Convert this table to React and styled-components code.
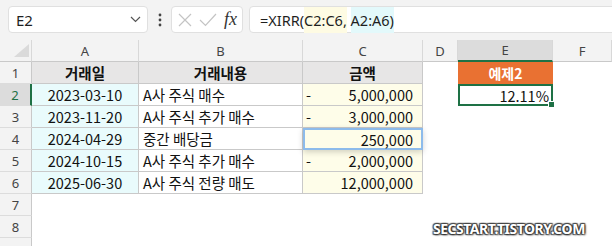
import React from 'react';
import styled, { createGlobalStyle, css } from 'styled-components';

const Global = createGlobalStyle`
  html, body { margin: 0; padding: 0; background: #fff; }
  body { font-family: "Noto Sans CJK KR", "Noto Sans", sans-serif; }
`;

const Page = styled.div`
  position: relative;
  width: 612px;
  height: 246px;
  overflow: hidden;
  background: #fff;
`;

const Toolbar = styled.div`
  display: flex;
  align-items: stretch;
  height: 40px;
  box-sizing: border-box;
  padding: 6px 0 7px 8px;
  background: #f3f3f3;
  overflow: hidden;
`;

const Box = styled.div`
  box-sizing: border-box;
  background: #fff;
  border: 1px solid #e0e0e0;
  border-radius: 4px;
  display: flex;
  align-items: center;
`;

const NameBox = styled(Box)`
  width: 140px;
  justify-content: space-between;
  padding: 0 6px 0 7px;
  font-family: "Noto Sans", sans-serif;
  font-size: 15px;
  color: #1f1f1f;
`;

const Dots = styled.div`
  width: 23px;
  display: flex;
  align-items: center;
  justify-content: center;
`;

const FuncBox = styled(Box)`
  width: 72px;
  padding: 0 5px 0 6px;
  justify-content: space-between;
`;

const Fx = styled.span`
  font-family: "Liberation Serif", serif;
  font-style: italic;
  font-size: 18px;
  color: #333;
  line-height: 1;
  margin-bottom: 2px;
`;

const FormulaBox = styled(Box)`
  flex: 1;
  margin-left: 6px;
  margin-right: -8px;
  padding-left: 10px;
  font-family: "Noto Sans", sans-serif;
  font-size: 14.5px;
  color: #1f1f1f;
`;

const FormulaText = styled.span`
  white-space: pre;
`;

const Ref = styled.span`
  background: ${p => p.$bg};
  padding: 3px 0;
`;

const Sheet = styled.div`
  display: grid;
  grid-template-columns: 32px 107px 164px 120px 35px 95px 1fr;
  grid-auto-rows: 22px;
`;

const ColHead = styled.div`
  box-sizing: border-box;
  background: ${p => (p.$selected ? '#dcdcdc' : '#f3f3f3')};
  border-right: 1px solid #d8d8d8;
  border-bottom: ${p => (p.$selected ? '2px solid #1e7145' : '1px solid #c9c9c9')};
  display: flex;
  align-items: center;
  justify-content: center;
  font-family: "Noto Sans", sans-serif;
  font-size: 13px;
  color: #444;
`;

const Corner = styled(ColHead)`
  justify-content: flex-end;
  align-items: flex-end;
  padding: 0 2px 4px 0;
`;

const RowHead = styled.div`
  box-sizing: border-box;
  background: ${p => (p.$selected ? '#dcdcdc' : '#f3f3f3')};
  border-right: ${p => (p.$selected ? '2px solid #1e7145' : '1px solid #c9c9c9')};
  border-bottom: 1px solid #dcdcdc;
  display: flex;
  align-items: center;
  justify-content: center;
  font-family: "Noto Sans", sans-serif;
  font-size: 13px;
  color: ${p => (p.$selected ? '#1e7145' : '#444')};
`;

const Cell = styled.div`
  box-sizing: border-box;
  display: flex;
  align-items: center;
  font-size: 14.5px;
  color: #111;
  white-space: nowrap;
  padding: 0 4px;
  background: ${p => p.$bg || '#fff'};
  justify-content: ${p => p.$align || 'flex-start'};
  font-weight: ${p => (p.$bold ? 700 : 400)};
  ${p => p.$table && css`
    border-right: 1px solid #c9c9c9;
    border-bottom: 1px solid #c9c9c9;
  `}
`;

const AmountCell = styled(Cell)`
  justify-content: space-between;
  padding: 0 9px 0 3px;
  ${p => p.$focus && css`
    position: relative;
    z-index: 1;
    border: 2px solid #8dbbeb;
    padding: 0 8px 0 2px;
    box-shadow: 0 2px 6px rgba(0, 0, 0, 0.18);
  `}
`;

const TitleCell = styled(Cell)`
  background: #e97132;
  color: #fff;
  font-weight: 700;
  justify-content: center;
  font-size: 14px;
`;

const ActiveCell = styled(Cell)`
  position: relative;
  border: 2px solid #1e7145;
  justify-content: flex-end;
  padding: 0 2px 0 0;
  &::after {
    content: '';
    position: absolute;
    right: -4px;
    bottom: -4px;
    width: 5px;
    height: 5px;
    background: #1e7145;
    border: 1px solid #fff;
  }
`;

const Watermark = styled.div`
  position: absolute;
  left: 433px;
  top: 219px;
  font-family: "Noto Sans", sans-serif;
  font-weight: 700;
  font-size: 14px;
  letter-spacing: -0.5px;
  color: #fff;
  text-shadow: 0 0 2px #222, 1px 1px 2px #333, -1px -1px 1px #555, 1px -1px 1px #555, -1px 1px 1px #555;
`;

const cols = ['A', 'B', 'C', 'D', 'E', 'F'];

const rows = [
  ['2023-03-10', 'A사 주식 매수', '5,000,000', true],
  ['2023-11-20', 'A사 주식 추가 매수', '3,000,000', true],
  ['2024-04-29', '중간 배당금', '250,000', false],
  ['2024-10-15', 'A사 주식 추가 매수', '2,000,000', true],
  ['2025-06-30', 'A사 주식 전량 매도', '12,000,000', false],
];

const CYAN = '#e9fbfc';
const YELLOW = '#fefde9';
const HEAD = '#e7e6e6';

function Chevron() {
  return (
    <svg width="11" height="7" viewBox="0 0 11 7">
      <path d="M1 1 L5.5 5.5 L10 1" fill="none" stroke="#555" strokeWidth="1.2" />
    </svg>
  );
}

function VDots() {
  return (
    <svg width="4" height="14" viewBox="0 0 4 14">
      <circle cx="2" cy="2" r="1.4" fill="#444" />
      <circle cx="2" cy="7" r="1.4" fill="#444" />
      <circle cx="2" cy="12" r="1.4" fill="#444" />
    </svg>
  );
}

function XIcon() {
  return (
    <svg width="14" height="14" viewBox="0 0 14 14">
      <path d="M1 1 L13 13 M13 1 L1 13" stroke="#c4c4c4" strokeWidth="1.2" fill="none" />
    </svg>
  );
}

function CheckIcon() {
  return (
    <svg width="18" height="14" viewBox="0 0 18 14">
      <path d="M1 7 L6.5 12.5 L17 1" stroke="#c4c4c4" strokeWidth="1.2" fill="none" />
    </svg>
  );
}

function Triangle() {
  return (
    <svg width="15" height="13" viewBox="0 0 15 13">
      <path d="M15 0 L15 13 L0 13 Z" fill="#dadada" />
    </svg>
  );
}

export default function App() {
  return (
    <Page>
      <Global />
      <Toolbar>
        <NameBox>
          <span>E2</span>
          <Chevron />
        </NameBox>
        <Dots>
          <VDots />
        </Dots>
        <FuncBox>
          <XIcon />
          <CheckIcon />
          <Fx>fx</Fx>
        </FuncBox>
        <FormulaBox>
          <FormulaText>
            =XIRR(<Ref $bg="#fefbe3">C2:C6,</Ref>{' '}<Ref $bg="#e3f9fb">A2:A6)</Ref>
          </FormulaText>
        </FormulaBox>
      </Toolbar>
      <Sheet>
        <Corner>
          <Triangle />
        </Corner>
        {cols.map(c => (
          <ColHead key={c} $selected={c === 'E'}>{c}</ColHead>
        ))}

        <RowHead>1</RowHead>
        <Cell $table $bold $bg={HEAD} $align="center">거래일</Cell>
        <Cell $table $bold $bg={HEAD} $align="center">거래내용</Cell>
        <Cell $table $bold $bg={HEAD} $align="center">금액</Cell>
        <Cell />
        <TitleCell>예제2</TitleCell>
        <Cell />

        {rows.map(([date, desc, amt, neg], i) => (
          <React.Fragment key={date}>
            <RowHead $selected={i === 0}>{i + 2}</RowHead>
            <Cell $table $bg={CYAN} $align="center">{date}</Cell>
            <Cell $table>{desc}</Cell>
            <AmountCell $table $bg={YELLOW} $focus={i === 2}>
              <span>{neg ? '-' : ''}</span>
              <span>{amt}</span>
            </AmountCell>
            <Cell />
            {i === 0 ? <ActiveCell>12.11%</ActiveCell> : <Cell />}
            <Cell />
          </React.Fragment>
        ))}

        {['7', '8', ''].map(n => (
          <React.Fragment key={n || 'x'}>
            <RowHead>{n}</RowHead>
            <Cell /><Cell /><Cell /><Cell /><Cell /><Cell />
          </React.Fragment>
        ))}
      </Sheet>
      <Watermark>SECSTART.TISTORY.COM</Watermark>
    </Page>
  );
}
